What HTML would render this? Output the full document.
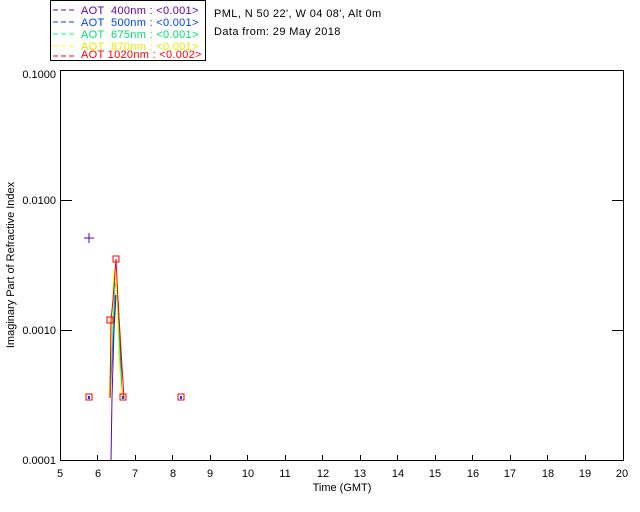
<html><head><style>body{margin:0;background:#fff}svg{display:block}text{font-family:"Liberation Sans",sans-serif;font-size:11px}</style></head><body>
<svg width="640" height="512" xmlns="http://www.w3.org/2000/svg">
<rect width="640" height="512" fill="#fff"/>
<rect x="50.5" y="0.5" width="155" height="60" fill="none" stroke="#000"/>
<g font-size="11" letter-spacing="0.3">
<line x1="53" y1="10" x2="76" y2="10" stroke="#6000b0" stroke-dasharray="5,3"/><text x="81" y="14" fill="#6000b0" xml:space="preserve">AOT  400nm : &lt;0.001&gt;</text>
<line x1="53" y1="22" x2="76" y2="22" stroke="#0040ff" stroke-dasharray="5,3"/><text x="81" y="26" fill="#0040ff" xml:space="preserve">AOT  500nm : &lt;0.001&gt;</text>
<line x1="53" y1="34" x2="76" y2="34" stroke="#00ff80" stroke-dasharray="5,3"/><text x="81" y="38" fill="#00e070" xml:space="preserve">AOT  675nm : &lt;0.001&gt;</text>
<line x1="53" y1="46" x2="76" y2="46" stroke="#ffff00" stroke-dasharray="5,3"/><text x="81" y="50" fill="#e8e800" xml:space="preserve">AOT  870nm : &lt;0.001&gt;</text>
<line x1="53" y1="56" x2="76" y2="56" stroke="#ff0000" stroke-dasharray="5,3"/><text x="81" y="58" fill="#ff0000" xml:space="preserve">AOT 1020nm : &lt;0.002&gt;</text>
</g>
<text x="214" y="17" letter-spacing="0.4">PML, N 50 22', W 04 08', Alt 0m</text>
<text x="214" y="35" letter-spacing="0.4">Data from: 29 May 2018</text>
<rect x="60.5" y="70.5" width="563" height="390" fill="none" stroke="#000"/>
<g stroke="#000">
<line x1="60" y1="200.5" x2="72" y2="200.5"/><line x1="612" y1="200.5" x2="623" y2="200.5"/>
<line x1="60" y1="330.5" x2="72" y2="330.5"/><line x1="612" y1="330.5" x2="623" y2="330.5"/>
</g>
<g stroke="#000">
<line x1="97.5" y1="455" x2="97.5" y2="460"/><line x1="135.5" y1="455" x2="135.5" y2="460"/><line x1="172.5" y1="455" x2="172.5" y2="460"/><line x1="210.5" y1="455" x2="210.5" y2="460"/><line x1="247.5" y1="455" x2="247.5" y2="460"/><line x1="285.5" y1="455" x2="285.5" y2="460"/><line x1="322.5" y1="455" x2="322.5" y2="460"/><line x1="360.5" y1="455" x2="360.5" y2="460"/><line x1="397.5" y1="455" x2="397.5" y2="460"/><line x1="435.5" y1="455" x2="435.5" y2="460"/><line x1="472.5" y1="455" x2="472.5" y2="460"/><line x1="510.5" y1="455" x2="510.5" y2="460"/><line x1="547.5" y1="455" x2="547.5" y2="460"/><line x1="585.5" y1="455" x2="585.5" y2="460"/>
</g>
<g text-anchor="middle">
<text x="60" y="477">5</text><text x="98" y="477">6</text><text x="135" y="477">7</text><text x="173" y="477">8</text><text x="210" y="477">9</text><text x="248" y="477">10</text><text x="285" y="477">11</text><text x="323" y="477">12</text><text x="360" y="477">13</text><text x="398" y="477">14</text><text x="435" y="477">15</text><text x="473" y="477">16</text><text x="510" y="477">17</text><text x="548" y="477">18</text><text x="585" y="477">19</text><text x="622" y="477">20</text>
<text x="342" y="491">Time (GMT)</text>
</g>
<g text-anchor="end">
<text x="56" y="78">0.1000</text><text x="56" y="204">0.0100</text><text x="56" y="334">0.0010</text><text x="56" y="464">0.0001</text>
</g>
<text transform="translate(14,265) rotate(-90)" text-anchor="middle">Imaginary Part of Refractive Index</text>
<g fill="none">
<polyline points="111,460 112,398 114,330 116,295 118,300 120,340 122,398" stroke="#6000b0"/>
<polyline points="110,398 113,340 115,295 117,300 120,350 122,398" stroke="#0040ff"/>
<polyline points="110,398 112,350 115,282 117,290 120,360 122,398" stroke="#00ff80"/>
<polyline points="109,398 111,350 114,270 116,275 119,360 122,398" stroke="#ffff00"/>
<polyline points="110,398 111,320 113,300 116,259 118,300 121,350 124,398" stroke="#ff0000"/>
<path d="M89,233v10M84,238h10" stroke="#6000b0"/>
<rect x="86" y="394" width="6" height="6" stroke="#f00"/><rect x="120" y="394" width="6" height="6" stroke="#f00"/><rect x="178" y="394" width="6" height="6" stroke="#f00"/>
<rect x="107" y="317" width="6" height="6" stroke="#f00"/><rect x="113" y="256" width="6" height="6" stroke="#f00"/>
</g>
<g fill="#0040ff"><rect x="88" y="396" width="2" height="3"/><rect x="122" y="396" width="2" height="3"/><rect x="180" y="396" width="2" height="3"/></g>
</svg></body></html>
